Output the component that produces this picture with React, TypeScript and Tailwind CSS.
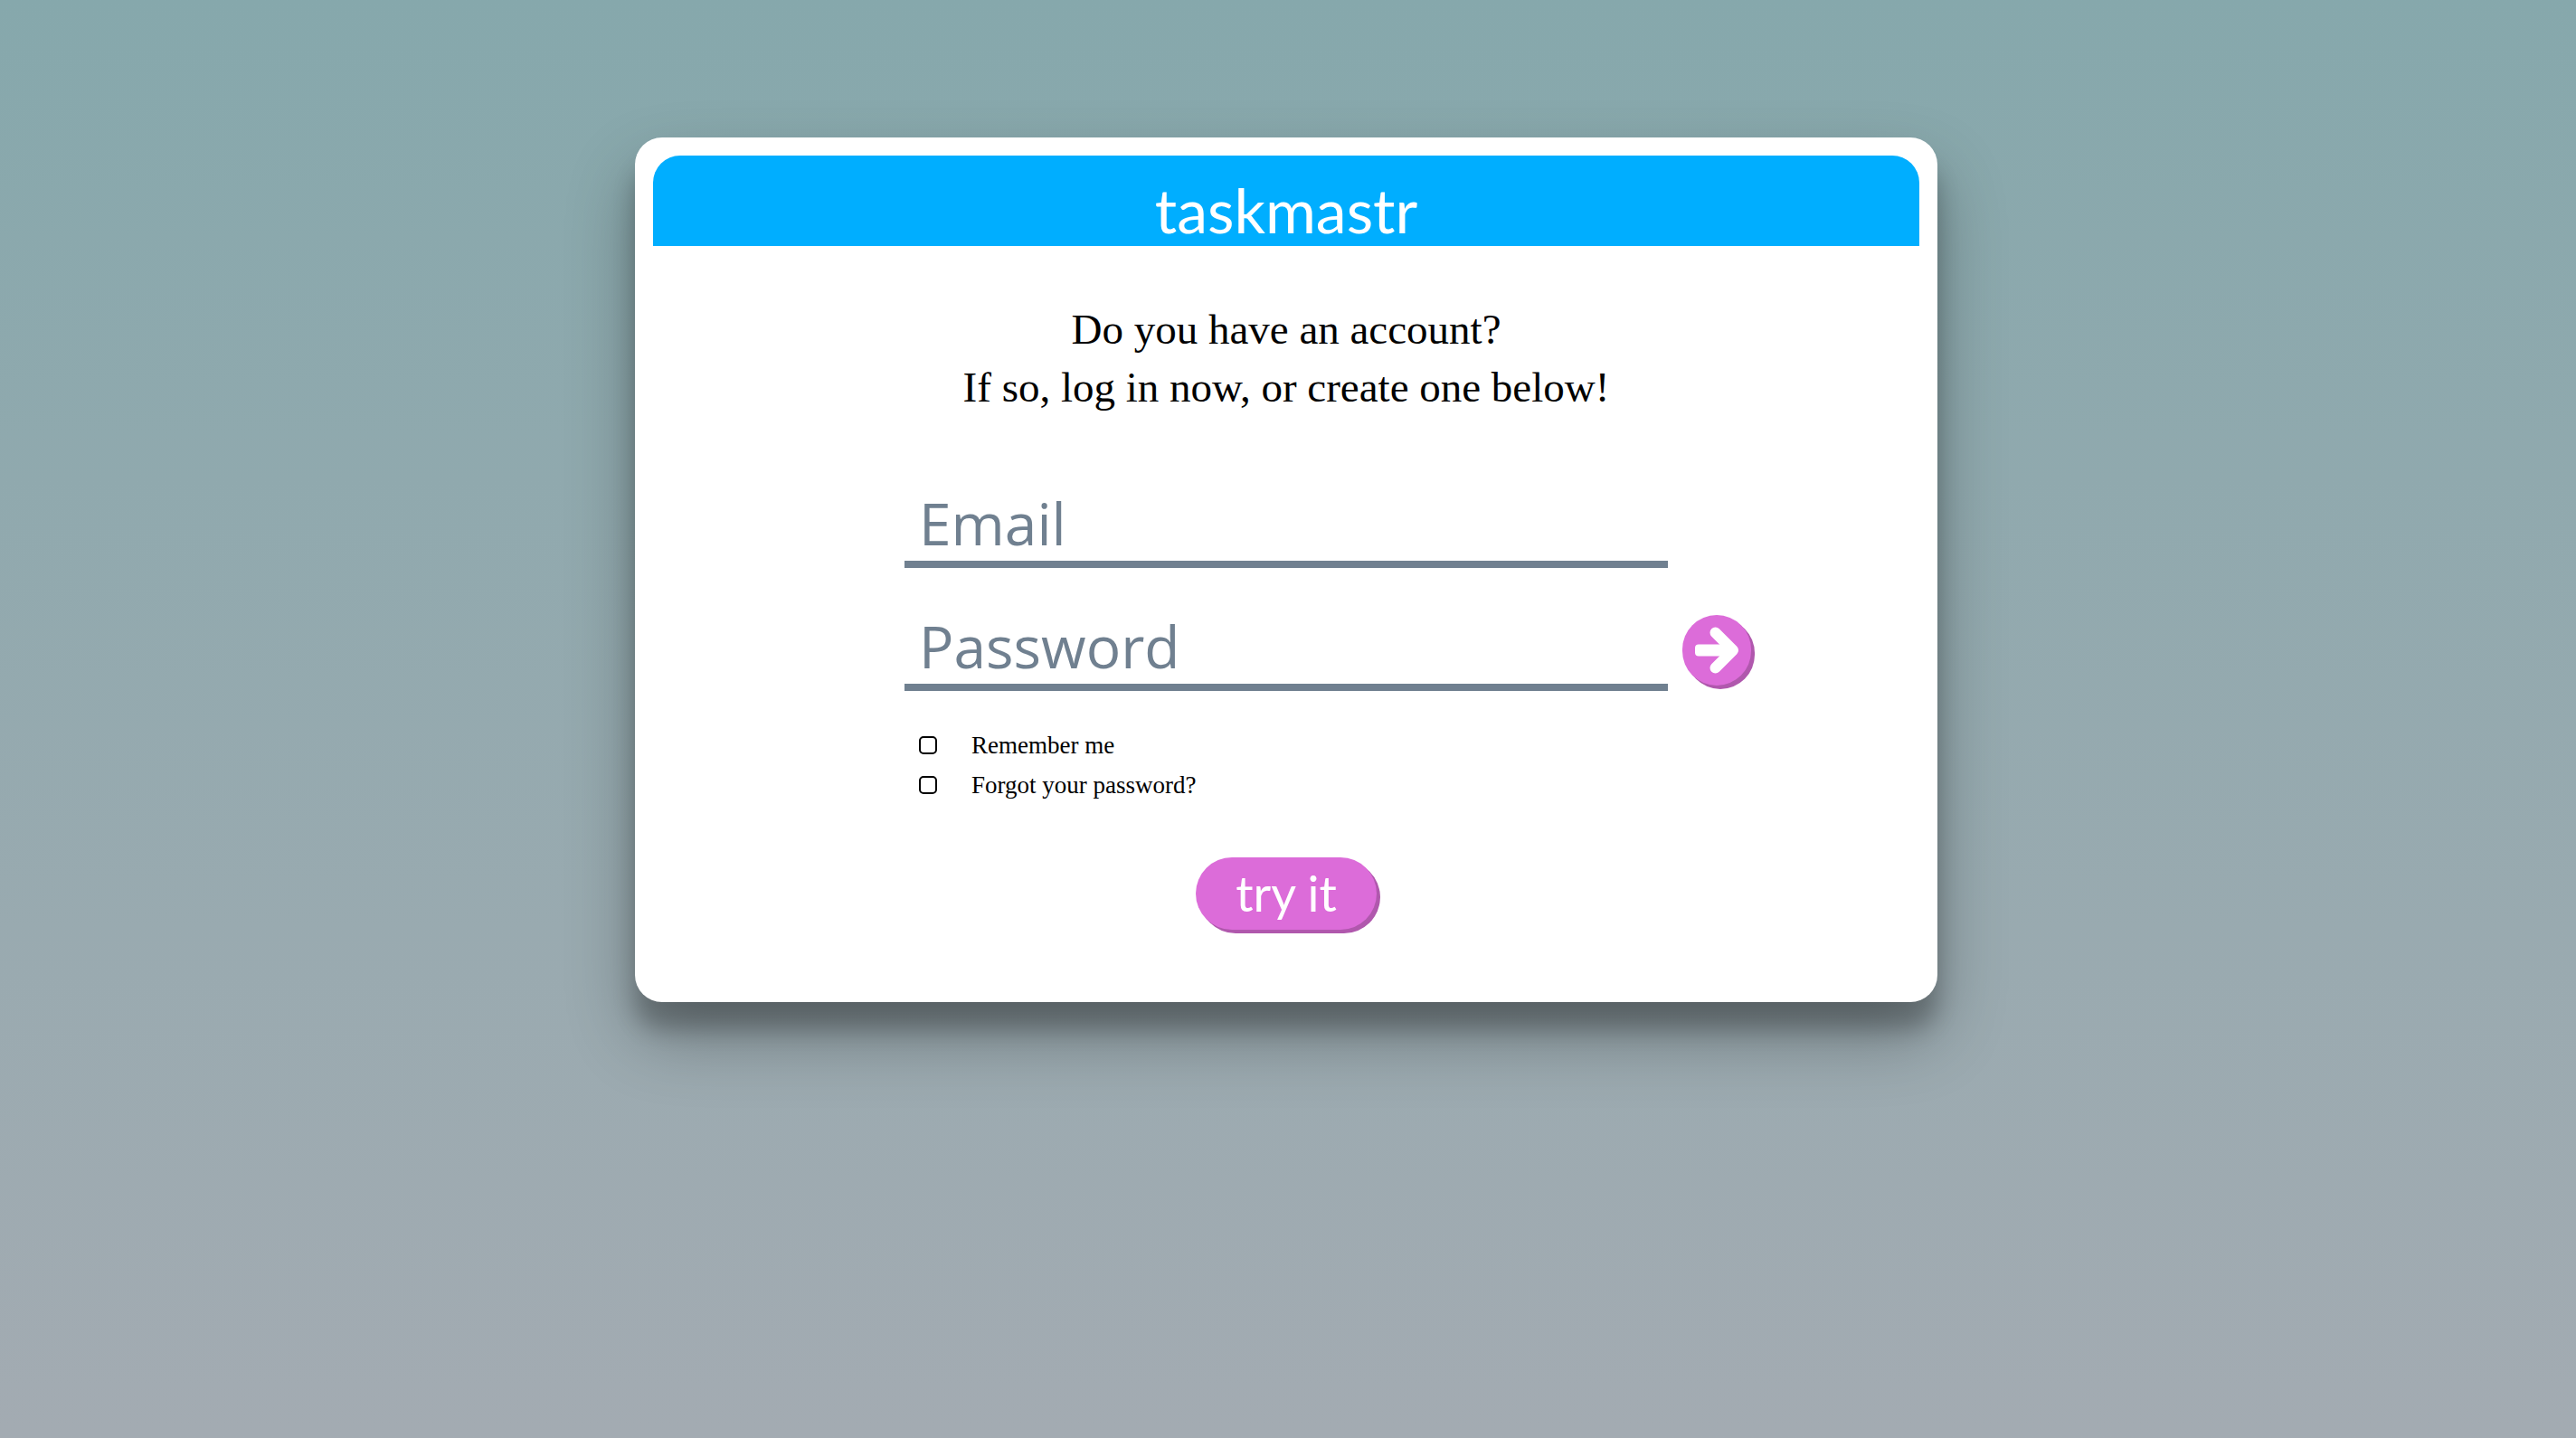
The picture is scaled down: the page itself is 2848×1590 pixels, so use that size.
import React from "react";

const orchidButton =
  "flex cursor-pointer items-center justify-center bg-[#dc6cd9] text-white shadow-[4px_4px_0_#b058ad]";

const lineInput =
  "h-[108px] w-full border-b-8 border-[#708090] bg-transparent px-4 pt-4 font-['Open_Sans',sans-serif] text-[64px] leading-none text-[#708090] outline-none placeholder:text-[#708090] placeholder:opacity-100";

function ArrowIcon() {
  return (
    <svg viewBox="0 0 48 52" className="h-[52px] w-12" fill="none" aria-hidden="true">
      <rect x="0" y="19.500" width="40" height="13" rx="4" fill="currentColor" />
      <path
        d="M22.500 6.500L42 26L22.500 45.500"
        stroke="currentColor"
        strokeWidth="12"
        strokeLinecap="round"
        strokeLinejoin="round"
      />
    </svg>
  );
}

function Option({ id, label }: { id: string; label: string }) {
  return (
    <div className="flex h-11 items-center gap-[38px]">
      <input
        id={id}
        type="checkbox"
        className="size-5 appearance-none rounded-[5px] border-2 border-black bg-white checked:bg-black"
      />
      <label htmlFor={id} className="text-[27px] leading-none">
        {label}
      </label>
    </div>
  );
}

export default function App() {
  return (
    <div className="min-h-screen bg-linear-to-b from-[#86a8ac] to-[#a3abb2] pt-[152px] pr-1 pb-16 font-['Liberation_Serif',serif] text-black">
      <main className="mx-auto w-full max-w-[1440px] rounded-[30px] bg-white p-5 pb-20 shadow-[0_38px_76px_rgba(0,0,0,0.3),0_30px_24px_rgba(0,0,0,0.22)]">
        <header className="flex h-[100px] items-end justify-center rounded-t-[30px] bg-[#00aeff]">
          <h1 className="font-['Lato',sans-serif] text-[68px] leading-[80px] text-white">taskmastr</h1>
        </header>
        <p className="mt-[60px] text-center text-[47px] leading-[64px]">
          Do you have an account?
          <br />
          If so, log in now, or create one below!
        </p>
        <form onSubmit={(e) => e.preventDefault()}>
          <div className="mt-[60px] grid grid-cols-[1fr_minmax(0,844px)_1fr] gap-x-4 gap-y-7">
            <input className={`col-start-2 ${lineInput}`} type="email" placeholder="Email" aria-label="Email" />
            <input className={`col-start-2 ${lineInput}`} type="password" placeholder="Password" aria-label="Password" />
            <button
              type="submit"
              aria-label="Log in"
              className={`mb-1.5 h-[78px] w-[76px] self-end rounded-full ${orchidButton}`}
            >
              <ArrowIcon />
            </button>
            <div className="col-start-2 px-4 pt-2.5">
              <Option id="remember" label="Remember me" />
              <Option id="forgot" label="Forgot your password?" />
            </div>
          </div>
          <button
            type="button"
            className={`mx-auto mt-[58px] h-20 w-[200px] rounded-full font-['Lato',sans-serif] text-[54px] leading-none ${orchidButton}`}
          >
            try it
          </button>
        </form>
      </main>
    </div>
  );
}
